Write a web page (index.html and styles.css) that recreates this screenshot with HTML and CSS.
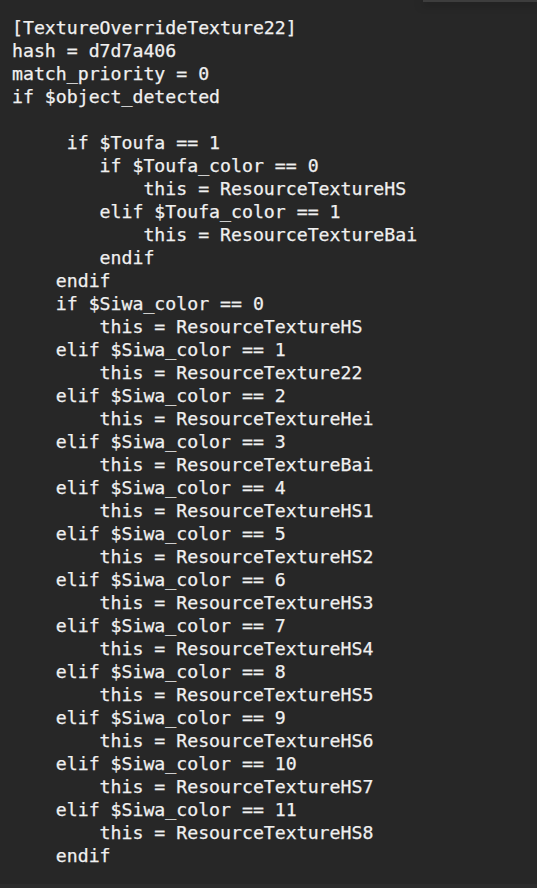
FILE: index.html
```html
<!DOCTYPE html>
<html>
<head>
<meta charset="utf-8">
<link rel="stylesheet" href="styles.css">
</head>
<body>
<div class="editor">
<pre class="code">[TextureOverrideTexture22]
hash = d7d7a406
match_priority = 0
if $object_detected

     if $Toufa == 1
        if $Toufa_color == 0
            this = ResourceTextureHS
        elif $Toufa_color == 1
            this = ResourceTextureBai
        endif
    endif
    if $Siwa_color == 0
        this = ResourceTextureHS
    elif $Siwa_color == 1
        this = ResourceTexture22
    elif $Siwa_color == 2
        this = ResourceTextureHei
    elif $Siwa_color == 3
        this = ResourceTextureBai
    elif $Siwa_color == 4
        this = ResourceTextureHS1
    elif $Siwa_color == 5
        this = ResourceTextureHS2
    elif $Siwa_color == 6
        this = ResourceTextureHS3
    elif $Siwa_color == 7
        this = ResourceTextureHS4
    elif $Siwa_color == 8
        this = ResourceTextureHS5
    elif $Siwa_color == 9
        this = ResourceTextureHS6
    elif $Siwa_color == 10
        this = ResourceTextureHS7
    elif $Siwa_color == 11
        this = ResourceTextureHS8
    endif</pre>
<div class="menu-edge"></div>
<div class="status-strip"></div>
</div>
</body>
</html>
```
FILE: styles.css
```css
html, body {
  margin: 0;
  padding: 0;
  background: #272727;
}
.editor {
  position: relative;
  width: 537px;
  height: 888px;
  overflow: hidden;
  background: #272727;
  display: flex;
  flex-direction: column;
}
.code {
  margin: 0;
  padding: 16px 0 0 12px;
  font-family: "DejaVu Sans Mono", "Liberation Mono", monospace;
  font-size: 18.2px;
  line-height: 23px;
  color: #f0f0f0;
  -webkit-text-stroke: 0.25px #f0f0f0;
  white-space: pre;
  flex: 1;
}
.menu-edge {
  position: absolute;
  top: 0;
  left: 423px;
  right: 0;
  height: 2px;
  background: #3d3d3d;
  box-shadow: 0 2px 8px rgba(0,0,0,0.5);
}
.status-strip {
  height: 4px;
  background: #2c2c2c;
}
```
